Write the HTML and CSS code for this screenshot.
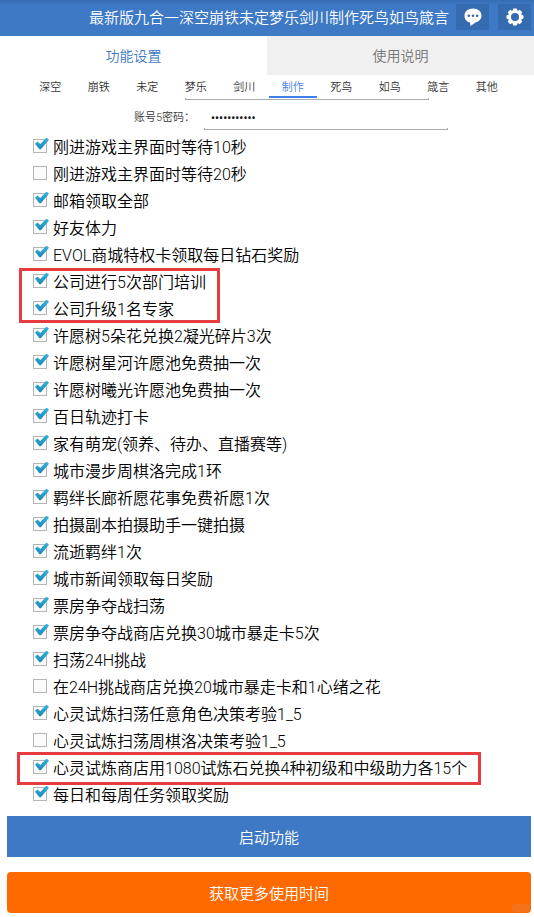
FILE: index.html
```html
<!DOCTYPE html>
<html lang="zh-CN">
<head>
<meta charset="utf-8">
<meta name="viewport" content="width=device-width, initial-scale=1">
<title>功能设置</title>
<link rel="stylesheet" href="styles.css">
</head>
<body>
<header class="topbar">
  <h1 class="title">最新版九合一深空崩铁未定梦乐剑川制作死鸟如鸟箴言</h1>
  <div class="topbar-tools">
    <button class="icon-btn" type="button" aria-label="消息">
      <svg width="20" height="20" viewBox="0 0 20 20"><path fill="#fff" d="M10 1.500C5 1.500 1.500 4.500 1.500 8.700c0 3.400 2.300 6 5.600 6.900L7.500 19l5-3.600c3.600-.900 6-3.400 6-6.700 0-4.200-3.500-7.200-8.500-7.200z"/><g fill="#356bb0"><circle cx="5.800" cy="8.700" r="1.300"/><circle cx="10" cy="8.700" r="1.300"/><circle cx="14.200" cy="8.700" r="1.300"/></g></svg>
    </button>
    <button class="icon-btn" type="button" aria-label="设置">
      <svg width="20" height="20" viewBox="0 0 20 20"><g fill="#fff"><g id="teeth"><rect x="7.900" y="1.500" width="4.200" height="17" rx="1"/><rect x="1.500" y="7.900" width="17" height="4.200" rx="1"/></g><use href="#teeth" transform="rotate(45 10 10)"/><circle cx="10" cy="10" r="7"/></g><circle cx="10" cy="10" r="4" fill="#356bb0"/></svg>
    </button>
  </div>
</header>
<nav class="tabs">
  <button class="tab tab-active" type="button">功能设置</button>
  <button class="tab" type="button">使用说明</button>
</nav>
<nav class="subtabs">
  <button class="subtab" type="button">深空</button>
  <button class="subtab" type="button">崩铁</button>
  <button class="subtab" type="button">未定</button>
  <button class="subtab" type="button">梦乐</button>
  <button class="subtab" type="button">剑川</button>
  <button class="subtab subtab-active" type="button">制作</button>
  <button class="subtab" type="button">死鸟</button>
  <button class="subtab" type="button">如鸟</button>
  <button class="subtab" type="button">箴言</button>
  <button class="subtab" type="button">其他</button>
</nav>
<main class="panel">
  <div class="field-edge"></div>
  <div class="field">
    <label class="field-label" for="pwd">账号5密码：</label>
    <div class="field-box"><input class="field-input" id="pwd" type="password" value="12345678901"></div>
  </div>
  <div class="options">
    <label class="option"><input type="checkbox" checked>刚进游戏主界面时等待10秒</label>
    <label class="option"><input type="checkbox">刚进游戏主界面时等待20秒</label>
    <label class="option"><input type="checkbox" checked>邮箱领取全部</label>
    <label class="option"><input type="checkbox" checked>好友体力</label>
    <label class="option"><input type="checkbox" checked>EVOL商城特权卡领取每日钻石奖励</label>
    <div class="marked marked-short">
      <label class="option"><input type="checkbox" checked>公司进行5次部门培训</label>
      <label class="option"><input type="checkbox" checked>公司升级1名专家</label>
    </div>
    <label class="option"><input type="checkbox" checked>许愿树5朵花兑换2凝光碎片3次</label>
    <label class="option"><input type="checkbox" checked>许愿树星河许愿池免费抽一次</label>
    <label class="option"><input type="checkbox" checked>许愿树曦光许愿池免费抽一次</label>
    <label class="option"><input type="checkbox" checked>百日轨迹打卡</label>
    <label class="option"><input type="checkbox" checked>家有萌宠(领养、待办、直播赛等)</label>
    <label class="option"><input type="checkbox" checked>城市漫步周棋洛完成1环</label>
    <label class="option"><input type="checkbox" checked>羁绊长廊祈愿花事免费祈愿1次</label>
    <label class="option"><input type="checkbox" checked>拍摄副本拍摄助手一键拍摄</label>
    <label class="option"><input type="checkbox" checked>流逝羁绊1次</label>
    <label class="option"><input type="checkbox" checked>城市新闻领取每日奖励</label>
    <label class="option"><input type="checkbox" checked>票房争夺战扫荡</label>
    <label class="option"><input type="checkbox" checked>票房争夺战商店兑换30城市暴走卡5次</label>
    <label class="option"><input type="checkbox" checked>扫荡24H挑战</label>
    <label class="option"><input type="checkbox">在24H挑战商店兑换20城市暴走卡和1心绪之花</label>
    <label class="option"><input type="checkbox" checked>心灵试炼扫荡任意角色决策考验1_5</label>
    <label class="option"><input type="checkbox">心灵试炼扫荡周棋洛决策考验1_5</label>
    <div class="marked marked-long">
      <label class="option"><input type="checkbox" checked>心灵试炼商店用1080试炼石兑换4种初级和中级助力各15个</label>
    </div>
    <label class="option"><input type="checkbox" checked>每日和每周任务领取奖励</label>
  </div>
</main>
<footer class="actions">
  <button class="action action-start" type="button">启动功能</button>
  <button class="action action-more" type="button">获取更多使用时间</button>
</footer>
</body>
</html>
```
FILE: styles.css
```css
* {
  box-sizing: border-box;
}

body {
  margin: 0;
  background: #fff;
  color: #000;
  font-family: Roboto, "Noto Sans CJK SC", sans-serif;
  font-weight: 350;
}

button {
  margin: 0;
  padding: 0;
  border: 0;
  background: none;
  font-family: inherit;
  font-weight: inherit;
}

.topbar {
  display: flex;
  align-items: center;
  justify-content: flex-end;
  gap: 7px;
  height: 36px;
  padding-right: 3px;
  background: linear-gradient(#366eb4, #3d79c4 6px);
}

.title {
  margin: 0;
  color: #fff;
  font-size: 15px;
  font-weight: inherit;
  line-height: 34px;
  white-space: nowrap;
}

.topbar-tools {
  display: flex;
  gap: 9px;
  padding-bottom: 2px;
}

.icon-btn {
  display: grid;
  place-items: center;
  flex: none;
  width: 33px;
  height: 26px;
  background: #356bb0;
}

.tabs {
  display: grid;
  grid-template-columns: 1fr 1fr;
  height: 39px;
}

.tab {
  padding-bottom: 1px;
  background: #f0f0f0;
  color: #777;
  font-size: 14px;
}

.tab-active {
  background: #fff;
  color: #3d79c4;
}

.subtabs {
  display: grid;
  grid-template-columns: repeat(10, 1fr);
  height: 23px;
  padding: 0 23px 0 26px;
}

.subtab {
  border-bottom: 2px solid transparent;
  color: #333;
  font-size: 11px;
}

.subtab-active {
  border-bottom-color: #3f7fe8;
  color: #3f7fe8;
}

.field-edge,
.field-box::after {
  box-sizing: border-box;
  display: block;
  width: 244px;
  height: 2px;
  border: solid #aaa;
  border-width: 0 1px 1px;
}

.field-edge {
  margin-left: 185px;
}

.field {
  display: flex;
  height: 33px;
  padding-left: 134px;
}

.field-label {
  width: 70px;
  color: #333;
  font-size: 11px;
  line-height: 36px;
  white-space: nowrap;
}

.field-box::after {
  content: "";
}

.field-input {
  display: block;
  width: 244px;
  height: 28px;
  padding: 8px 7px 0;
  border: 0;
  outline: 0;
  background: none;
  color: #111;
  font-family: Roboto, sans-serif;
  font-size: 12px;
}

.option {
  display: flex;
  align-items: center;
  gap: 6px;
  height: 27px;
  padding: 0 0 2px 33px;
  font-size: 16px;
  white-space: nowrap;
}

.option input {
  position: relative;
  flex: none;
  width: 14px;
  height: 14px;
  margin: 0;
  border: 1px solid #b4b4b4;
  background: #fbfbfb;
  appearance: none;
}

.option input:checked::before {
  content: "";
  position: absolute;
  top: -2px;
  left: 1px;
  width: 14px;
  height: 12px;
  background: linear-gradient(#35b2de, #1c86b4);
  clip-path: polygon(0 52%, 17% 34%, 38% 54%, 82% 0, 100% 18%, 42% 98%, 32% 98%);
}

.marked {
  position: relative;
}

.marked::after {
  content: "";
  position: absolute;
  box-sizing: border-box;
  border: 3px solid #e63c3f;
  pointer-events: none;
}

.marked-short::after {
  top: 0;
  bottom: -1px;
  left: 19px;
  width: 201px;
}

.marked-long::after {
  top: -2px;
  bottom: -4px;
  left: 17px;
  width: 464px;
}

.actions {
  display: grid;
  gap: 15px;
  padding: 8px 3px 4px 7px;
}

.action {
  height: 41px;
  padding-bottom: 1px;
  color: #fff;
  font-size: 15px;
}

.action-start {
  background: #3d79c4;
}

.action-more {
  position: relative;
  border-radius: 4px;
  background: #ff6a00;
}

.action-more::after {
  content: "";
  position: absolute;
  right: 1px;
  bottom: 1px;
  width: 18px;
  height: 8px;
  border-radius: 3px;
  background: #f5711a;
}
```
